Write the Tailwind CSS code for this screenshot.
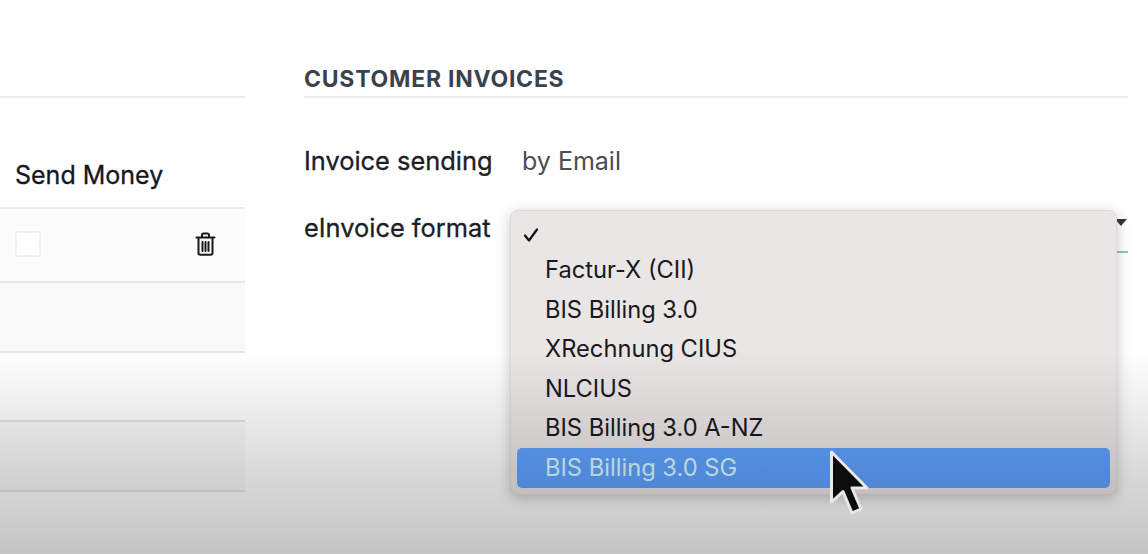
<!DOCTYPE html>
<html lang="en">

<head>
    <meta charset="UTF-8">
    <meta name="viewport" content="width=device-width, initial-scale=1.0">
    <title>Customer Invoices</title>
    <script src="https://cdn.jsdelivr.net/npm/@tailwindcss/browser@4"></script>
</head>

<body class="bg-white overflow-hidden font-['Inter','Liberation_Sans',sans-serif]">
    <div class="relative w-[1148px] h-[554px] flex overflow-hidden">
        <!-- left table -->
        <div class="w-[245px] shrink-0 flex flex-col pt-[96px]">
            <div class="h-[113px] border-t-2 border-b-2 border-[#ececec] flex items-end pb-[16px] pl-[15px]">
                <span class="text-[25px] leading-[32px] font-normal [-webkit-text-stroke:0.3px_#14181d] text-[#14181d]">Send Money</span>
            </div>
            <div class="h-[74px] border-b-2 border-[#e6e6e6] bg-[#fcfcfc] flex items-center justify-between pl-[15px] pr-[29px] pb-[3px]">
                <div class="w-[26px] h-[26px] border-2 border-[#f0f0f0] rounded-[2px] bg-white"></div>
                <svg width="21" height="24" viewBox="0 0 21 24" fill="none" stroke="#16191d" stroke-width="2" stroke-linecap="round" stroke-linejoin="round">
                    <path d="M1.5 5.5h18M7 5V3a1.5 1.5 0 0 1 1.5-1.5h4A1.5 1.5 0 0 1 14 3v2M3.5 6v15a1.8 1.8 0 0 0 1.8 1.8h10.4a1.8 1.8 0 0 0 1.8-1.8V6M7.5 10v9M10.5 10v9M13.5 10v9" />
                </svg>
            </div>
            <div class="h-[70px] border-b-2 border-[#e6e6e6] bg-[#f9f9f9]"></div>
            <div class="h-[69px] border-b-2 border-[#e4e4e4] bg-white"></div>
            <div class="h-[70px] border-b-2 border-[#e6e6e6] bg-[#f9f9f9]"></div>
        </div>

        <!-- settings -->
        <div class="ml-[59px] w-[824px] flex flex-col pt-[62px]">
            <div class="h-[36px] border-b-2 border-[#ececec] text-[23px] leading-[34px] font-bold text-[#3b424c] tracking-[0.75px]">CUSTOMER INVOICES</div>
            <div class="flex items-center mt-[43px] h-[40px]">
                <span class="w-[218px] text-[25.4px] font-normal [-webkit-text-stroke:0.3px_#1c2026] text-[#1c2026]">Invoice sending</span>
                <span class="text-[25px] text-[#4a4d52] relative top-[1px]">by Email</span>
            </div>
            <div class="flex mt-[27px] h-[40px] relative">
                <span class="w-[218px] text-[25.4px] font-normal [-webkit-text-stroke:0.3px_#1c2026] leading-[40px] text-[#1c2026]">eInvoice format</span>
                <div class="flex-1 border-b-2 border-[#8fc9b5] h-[45px]"></div>
                <div class="absolute right-[1px] top-[11px] w-0 h-0 border-l-[6px] border-r-[6px] border-t-[7px] border-l-transparent border-r-transparent border-t-[#33363a]"></div>
            </div>
        </div>

        <!-- open select menu -->
        <div class="absolute left-[510px] top-[210px] w-[607px] h-[285px] bg-[#ebe6e6] rounded-[8px] border border-[#dedada] shadow-[0_3px_14px_rgba(0,0,0,0.22)] px-[6px] pt-[4px] text-[23.7px] text-[#17191c]">
            <div class="h-[35px] pl-[6px] flex items-center pt-[5px]">
                <svg width="16" height="16" viewBox="0 0 16 16" fill="none" stroke="#111" stroke-width="2.2" stroke-linecap="round" stroke-linejoin="round"><path d="M2 8.5l4 5L14 2.5" /></svg>
            </div>
            <div class="h-[39.5px] pl-[28px] leading-[39px]">Factur-X (CII)</div>
            <div class="h-[39.5px] pl-[28px] leading-[39px]">BIS Billing 3.0</div>
            <div class="h-[39.5px] pl-[28px] leading-[39px]">XRechnung CIUS</div>
            <div class="h-[39.5px] pl-[28px] leading-[39px]">NLCIUS</div>
            <div class="h-[39.5px] pl-[28px] leading-[39px]">BIS Billing 3.0 A-NZ</div>
            <div class="h-[40px] pl-[28px] leading-[39px] bg-[#5fa2ff] rounded-[5px] text-[#d8fbff]">BIS Billing 3.0 SG</div>
        </div>

        <!-- bottom shade of the video -->
        <div class="absolute left-0 right-0 top-[350px] h-[204px] bg-gradient-to-b from-black/0 via-black/15 via-60% to-black/23 pointer-events-none"></div>

        <!-- mouse cursor -->
        <svg class="absolute left-[826px] top-[448px]" width="44" height="70" viewBox="0 0 44 70">
            <path d="M5.5 4V54L17 43.5L26 65L35 61L26 40H41Z" fill="#0c0c0c" stroke="#e8e8e8" stroke-width="3" stroke-linejoin="round" />
        </svg>
    </div>
</body>

</html>
